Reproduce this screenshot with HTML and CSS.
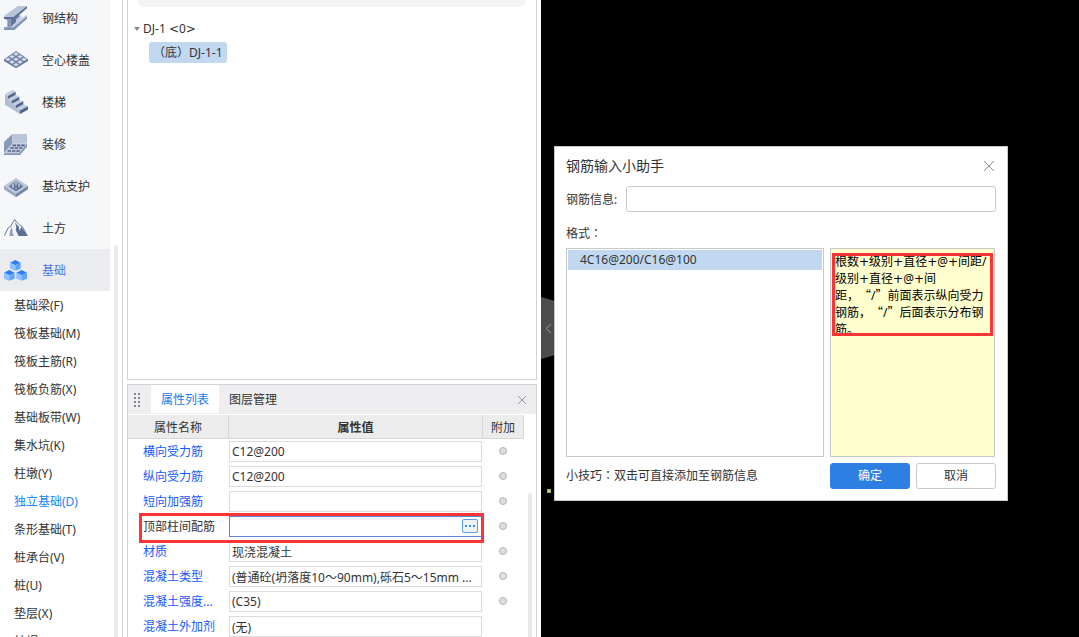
FILE: index.html
```html
<!DOCTYPE html>
<html lang="zh-CN">
<head>
<meta charset="utf-8">
<title>钢筋输入小助手</title>
<link rel="stylesheet" href="styles.css">
</head>
<body>
<div class="app">
  <aside class="sidebar">
    <nav class="modules">
      <button class="module" type="button"><svg class="module-icon" viewBox="0 0 72 72"><path fill="#b9c4d9" d="M0 30 42 0h27L28 33H0z"/><path fill="#5c6e94" d="M0 33h28L69 0v7L31 40h-9L9 41 0 38z"/><path fill="#8494b8" d="M10 40h10v24H10z"/><path fill="#63759b" d="m20 39 26-15v15L20 64z"/><path fill="#c4cde0" d="m20 63 46-36 3 2-39 35z"/><path fill="#c4cde0" d="m36 40 17-14v13L36 52z"/><path fill="#8292b5" d="M0 64h29l40-34v8L31 72H0z"/></svg>钢结构</button>
      <button class="module" type="button"><svg class="module-icon" viewBox="0 0 72 72"><path fill="#65779e" d="M0 34 36 9l36 25v5L36 61 0 39z"/><g fill="#dfe5f0" stroke="#a9b5ce" stroke-width="2"><path d="m36 13 8 5-8 5-8-5zM24 21l8 5-8 5-8-5zM48 21l8 5-8 5-8-5zM12 29l8 5-8 5-8-5zM36 29l8 5-8 5-8-5zM60 29l8 5-8 5-8-5zM24 37l8 5-8 5-8-5zM48 37l8 5-8 5-8-5zM36 45l8 5-8 5-8-5z"/></g></svg>空心楼盖</button>
      <button class="module" type="button"><svg class="module-icon" viewBox="0 0 72 72"><path fill="#b1bdd5" d="M3 12 12 18v9l12 5v9l12 5v9l12 5v12L3 44z"/><path fill="#c3cde0" d="M3 12 26 0l9 5-23 13zM12 27l23-13 11 6-23 12zM24 41l22-12 12 5-23 12zM36 55l22-12 14 6-24 12z"/><path fill="#53658c" d="m12 18 23-13v9L12 27zM23 32l23-12v9L24 41zM35 46l23-12v9L36 55zM48 61l24-12v10L48 72z"/></svg>楼梯</button>
      <button class="module" type="button"><svg class="module-icon" viewBox="0 0 72 72"><path fill="#8999ba" d="M0 30 25 6v29L0 64z"/><path fill="#bac5d9" d="M25 6h44v29H25z"/><path fill="#bec8da" d="M25 35h44L46 64H0z"/><path fill="#8494b5" d="M0 64h46l23-29v9L48 69H0z"/><path stroke="#53658c" stroke-width="5" stroke-dasharray="10 3" d="M26 40h37M19 48h37M11 57h37"/></svg>装修</button>
      <button class="module" type="button"><svg class="module-icon" viewBox="0 0 72 72"><path fill="#bdc7da" d="m0 35 36-23 36 23-36 24z"/><path fill="#99a7c3" d="m0 35 36 24v11L0 46z"/><path fill="#7787aa" d="m36 59 36-24v11L36 70z"/><path fill="#8090b2" d="m13 36 23-15 23 15-23 15z"/><path fill="#53658c" d="m17 39 19-11 19 11-19 12z"/><path fill="#c4cedf" d="M25 31h5v11h-5zM34 24h4v12h-4zM43 30h4v11h-4zM34 40h4v6h-4z"/></svg>基坑支护</button>
      <button class="module" type="button"><svg class="module-icon" viewBox="0 0 72 72"><path fill="none" stroke="#64759a" stroke-width="3" d="M1 59 13 35l6-3 13-21 11 12 5 5 6 3 16 28"/><path fill="#5c6d92" d="m33 17 4 18-2 7 9 18h26L52 32l-5 13-3-14-5-4z"/><path fill="#91a0bf" d="m23 33 3 12-1 4 5 11H16l3-18z"/></svg>土方</button>
      <button class="module module-active" type="button"><svg class="module-icon" viewBox="0 0 72 72"><g id="cube"><path fill="#2f7df4" d="m34 6 16 8-16 8-16-8z"/><path fill="#8fc0ff" d="m18 14 16 8v16l-16-6z"/><path fill="#61a4fc" d="m34 22 16-8v18l-16 6z"/></g><use href="#cube" x="-18" y="30"/><use href="#cube" x="19" y="30"/></svg>基础</button>
    </nav>
    <nav class="elements">
      <a class="element" href="#">基础梁(F)</a>
      <a class="element" href="#">筏板基础(M)</a>
      <a class="element" href="#">筏板主筋(R)</a>
      <a class="element" href="#">筏板负筋(X)</a>
      <a class="element" href="#">基础板带(W)</a>
      <a class="element" href="#">集水坑(K)</a>
      <a class="element" href="#">柱墩(Y)</a>
      <a class="element element-active" href="#">独立基础(D)</a>
      <a class="element" href="#">条形基础(T)</a>
      <a class="element" href="#">桩承台(V)</a>
      <a class="element" href="#">桩(U)</a>
      <a class="element" href="#">垫层(X)</a>
      <a class="element" href="#">柱帽</a>
    </nav>
    <div class="sidebar-scroll"></div>
  </aside>

  <main class="panels">
    <section class="tree">
      <div class="search"></div>
      <div class="tree-root"><svg class="caret" viewBox="0 0 6 4"><path fill="#8a8a8a" d="M0 0h6L3 4z"/></svg><span>DJ-1 <span class="wide">&lt;</span>0<span class="wide">&gt;</span></span></div>
      <div class="tree-item"><span class="centered" lang="zh-TW">（</span>底<span class="centered" lang="zh-TW">）</span>DJ-1-1</div>
    </section>

    <section class="props">
      <header class="tabs">
        <svg class="grip" viewBox="0 0 6 14"><path fill="#85858a" d="M0 0h2v2H0zM4 0h2v2H4zM0 4h2v2H0zM4 4h2v2H4zM0 8h2v2H0zM4 8h2v2H4zM0 12h2v2H0zM4 12h2v2H4z"/></svg>
        <button class="tab tab-active" type="button">属性列表</button>
        <button class="tab" type="button">图层管理</button>
        <button class="tabs-close" type="button" aria-label="关闭"><svg class="small-cross" viewBox="0 0 8 8"><path stroke="#9a9a9e" d="m0 0 8 8M8 0 0 8"/></svg></button>
      </header>
      <table class="grid">
        <colgroup><col class="col-name"><col><col class="col-extra"></colgroup>
        <thead><tr><th>属性名称</th><th class="strong">属性值</th><th>附加</th></tr></thead>
        <tbody>
          <tr><td><label for="p1">横向受力筋</label></td><td><input class="value" id="p1" value="C12@200"></td><td><input class="dot" type="radio" aria-label="附加 横向受力筋"></td></tr>
          <tr><td><label for="p2">纵向受力筋</label></td><td><input class="value" id="p2" value="C12@200"></td><td><input class="dot" type="radio" aria-label="附加 纵向受力筋"></td></tr>
          <tr><td><label for="p3">短向加强筋</label></td><td><input class="value" id="p3"></td><td><input class="dot" type="radio" aria-label="附加 短向加强筋"></td></tr>
          <tr class="current"><td><label for="p4">顶部柱间配筋</label></td><td class="editing"><input class="value" id="p4"><button class="more" type="button" aria-label="更多"><svg class="more-dots" viewBox="0 0 10 2"><path fill="#3e8be2" d="M0 0h2v2H0zM4 0h2v2H4zM8 0h2v2H8z"/></svg></button></td><td><input class="dot" type="radio" aria-label="附加 顶部柱间配筋"></td></tr>
          <tr><td><label for="p5">材质</label></td><td><input class="value" id="p5" value="现浇混凝土"></td><td><input class="dot" type="radio" aria-label="附加 材质"></td></tr>
          <tr><td><label for="p6">混凝土类型</label></td><td><input class="value" id="p6" value="(普通砼(坍落度10～90mm),砾石5～15mm ..."></td><td><input class="dot" type="radio" aria-label="附加 混凝土类型"></td></tr>
          <tr><td><label for="p7">混凝土强度...</label></td><td><input class="value" id="p7" value="(C35)"></td><td><input class="dot" type="radio" aria-label="附加 混凝土强度"></td></tr>
          <tr><td><label for="p8">混凝土外加剂</label></td><td><input class="value" id="p8" value="(无)"></td><td></td></tr>
        </tbody>
      </table>
      <div class="mark mark-row"></div>
      <div class="props-scroll"></div>
    </section>
  </main>

  <section class="canvas">
    <svg class="handle" viewBox="0 0 14 62"><path fill="#4d4d4d" d="M0 0 14 4v54L0 62z"/><path fill="none" stroke="#9b9b9b" d="m10 27-5 4.500 5 4.500"/></svg>
    <div class="point"></div>
    <form class="dialog">
      <header class="dialog-head">
        <h1 class="dialog-title">钢筋输入小助手</h1>
        <button class="dialog-close" type="button" aria-label="关闭"><svg class="cross" viewBox="0 0 12 12"><path stroke="#8a8a8a" d="m1 1 10 10M11 1 1 11"/></svg></button>
      </header>
      <div class="field"><label class="field-label" for="rebar">钢筋信息:</label><input class="rebar" id="rebar"></div>
      <div class="format">格式<span class="centered" lang="zh-TW">：</span></div>
      <div class="boxes">
        <div class="list"><div class="option">4C16@200/C16@100</div></div>
        <div class="note">根数<span class="wide">+</span>级别<span class="wide">+</span>直径<span class="wide">+</span>@<span class="wide">+</span>间距/<br>级别<span class="wide">+</span>直径<span class="wide">+</span>@<span class="wide">+</span>间<br>距，<span class="quote">“</span>/<span class="quote">”</span>前面表示纵向受力<br>钢筋，<span class="quote">“</span>/<span class="quote">”</span>后面表示分布钢<br>筋。<div class="mark mark-note"></div></div>
      </div>
      <footer class="dialog-foot">
        <p class="tip">小技巧<span class="centered" lang="zh-TW">：</span>双击可直接添加至钢筋信息</p>
        <button class="btn btn-primary" type="button">确定</button>
        <button class="btn" type="button">取消</button>
      </footer>
    </form>
  </section>
</div>
</body>
</html>
```
FILE: styles.css
```css
* { box-sizing: border-box; }
body {
  margin: 0;
  font: 12px/18px "Noto Sans", "Noto Sans CJK SC", sans-serif;
  text-spacing-trim: space-all;
  color: #333;
  background: #fff;
}
button, input { font: inherit; color: inherit; margin: 0; }
button { border: 0; padding: 0; background: none; }
svg { display: block; flex: none; }

.app { display: flex; height: 100vh; overflow: hidden; }

/* Glyphs that need a particular family */
.wide, .quote, .centered { line-height: 1px; }
.wide { font-family: "DejaVu Sans", sans-serif; }
.quote { font-family: "Noto Sans CJK SC", sans-serif; }
.centered { font-family: "Noto Sans CJK TC", sans-serif; }

/* Sidebar */
.sidebar { position: relative; flex: none; width: 123px; overflow: hidden; border-right: 1px solid #d4d4d6; }
.modules { width: 110px; margin-top: -3px; background: #f5f7f9; }
.module { display: flex; align-items: center; gap: 14px; width: 100%; height: 42px; padding: 2px 0 0 4px; }
.module-active { background: #ebecf0; color: #4a7be0; }
.module-icon { width: 24px; height: 24px; margin-bottom: 2px; }
.elements { display: flex; flex-direction: column; }
.element { height: 28px; padding-left: 14px; line-height: 30px; color: #333; text-decoration: none; }
.element-active { color: #1684fc; }
.sidebar-scroll { position: absolute; right: 4px; top: 245px; bottom: 0; width: 4px; border-radius: 2px 2px 0 0; background: #ebebeb; }

/* Middle column */
.panels { display: flex; flex-direction: column; gap: 4px; flex: none; width: 410px; margin: 0 4px; }
.tree { height: 380px; flex: none; border: 1px solid #d4d4d6; border-top: 0; }
.search { height: 7px; margin: 0 10px 12px 9px; border-radius: 0 0 12px 12px; background: #f4f4f4; }
.tree-root { display: flex; align-items: center; gap: 3px; height: 20px; padding-left: 6px; }
.caret { width: 6px; height: 4px; }
.tree-item { width: max-content; height: 21px; margin: 3px 0 0 21px; padding: 0 4px; border-radius: 3px; line-height: 21px; background: #c1d8f0; }

.props { position: relative; flex: 1; min-height: 0; overflow: hidden; border: 1px solid #d4d4d6; border-bottom: 0; }
.tabs { display: flex; align-items: center; height: 29px; margin-bottom: 1px; padding: 0 10px 0 6px; background: #eeeef0; }
.grip { width: 6px; height: 14px; margin-right: 11px; }
.tab { height: 28px; padding: 2px 10px 0; align-self: flex-start; }
.tab-active { background: #fff; color: #1a7bea; }
.tabs-close { margin-left: auto; }
.small-cross { width: 8px; height: 8px; overflow: visible; }

.grid { width: calc(100% - 12px); table-layout: fixed; border-collapse: separate; border-spacing: 0; }
.col-name { width: 101px; }
.col-extra { width: 41px; }
th { height: 24px; padding: 2px 0 0; font-weight: 400; border: solid #d6d6d6; border-width: 0 1px 1px 0; background: #ececec; }
.strong { font-weight: 700; }
td { height: 25px; padding: 0; line-height: 18px; text-align: center; }
td:first-child { padding-left: 15px; text-align: left; white-space: nowrap; color: #155aff; }
td:nth-child(2) { padding-right: 1px; }
td:last-child { padding: 0 2px 2px 0; }
.current td:first-child { color: #333; }
.value { display: block; width: 100%; height: 21px; padding: 0 2px; border: 1px solid #dcdcdc; background: #fff; outline: 0; }
.current .value { border-color: #5a87d6; }
.editing { position: relative; }
.more { position: absolute; right: 5px; top: 5px; display: grid; place-items: center; width: 16px; height: 14px; border: 1px solid #5a9fe6; border-radius: 2px; background: #eef3fa; }
.more-dots { width: 10px; height: 2px; }
.dot { appearance: none; display: block; width: 8px; height: 8px; margin: 0 auto; border: 1px solid #b3b3b8; border-radius: 50%; background: #dcdde0; }
.mark { position: absolute; border: 3px solid #fb3535; pointer-events: none; }
.mark-row { left: 11px; top: 128px; width: 345px; height: 30px; }
.props-scroll { position: absolute; right: 4px; top: 108px; bottom: 0; width: 4px; border-radius: 2px 2px 0 0; background: #e9e9e9; }

/* Drawing area */
.canvas { position: relative; flex: 1; background: #000; }
.handle { position: absolute; left: 0; top: 297px; width: 14px; height: 62px; }
.point { position: absolute; left: 6px; top: 489px; width: 4px; height: 4px; border: 1px solid #8fae50; background: #c5e67a; }

.dialog { position: absolute; left: 13px; top: 146px; width: 454px; padding: 0 11px 11px; border: 1px solid #c8c8c8; background: #fff; }
.dialog-head { display: flex; align-items: center; justify-content: space-between; height: 39px; padding: 0 1px 2px 0; }
.dialog-title { margin: 0; font-size: 14px; font-weight: 400; line-height: 20px; }
.cross { width: 12px; height: 12px; }
.field { display: flex; align-items: center; gap: 9px; }
.field-label { padding-top: 2px; }
.rebar { flex: 1; min-width: 0; height: 26px; border: 1px solid #c8c8c8; border-radius: 3px; background: #fff; outline: 0; }
.format { padding: 13px 0 5px; line-height: 18px; height: 36px; }
.boxes { display: flex; gap: 6px; height: 209px; margin-right: 1px; }
.list { flex: 1; padding: 1px; border: 1px solid #c8c8c8; }
.option { height: 20px; padding-left: 12px; line-height: 20px; background: #c1d8f0; }
.note { position: relative; width: 165px; padding: 4px; border: 1px solid #c8c8c8; line-height: 17px; white-space: nowrap; color: #000; background: #ffffcd; }
.mark-note { left: 1px; top: 4px; width: 161px; height: 83px; }
.dialog-foot { display: flex; align-items: center; gap: 6px; margin-top: 6px; }
.tip { flex: 1; margin: 0; }
.btn { width: 80px; height: 26px; border: 1px solid #c8c8c8; border-radius: 3px; background: #fff; }
.btn-primary { border-color: #2d7fe2; background: #2d7fe2; color: #fff; }
```
